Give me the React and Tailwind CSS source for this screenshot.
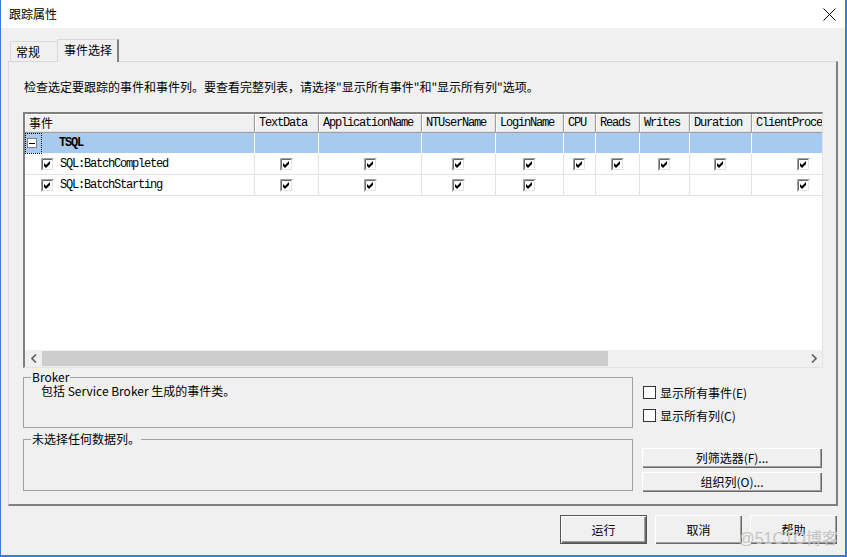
import React from "react";

const GridCheck = () => (
  <svg width="13" height="13" viewBox="0 0 13 13" className="block">
    <rect width="13" height="13" fill="#fff" />
    <path d="M0.5 12.5V0.5H12.5" stroke="#a0a0a0" fill="none" />
    <path d="M1.5 11.5V1.5H11.5" stroke="#696969" fill="none" />
    <path d="M1.5 11.5H11.5V1.5" stroke="#e3e3e3" fill="none" />
    <polygon points="3,5 5,7 9,3 9,6 5,10 3,8" fill="#000" />
  </svg>
);

const cols = [
  { name: "事件", w: 230 },
  { name: "TextData", w: 64 },
  { name: "ApplicationName", w: 103 },
  { name: "NTUserName", w: 74 },
  { name: "LoginName", w: 68 },
  { name: "CPU", w: 32 },
  { name: "Reads", w: 44 },
  { name: "Writes", w: 50 },
  { name: "Duration", w: 62 },
  { name: "ClientProcessID", w: 104 },
];

const rows = [
  { label: "SQL:BatchCompleted", checks: [1, 1, 1, 1, 1, 1, 1, 1, 1] },
  { label: "SQL:BatchStarting", checks: [1, 1, 1, 1, 0, 0, 0, 0, 1] },
];

const mono = "font-['Liberation_Mono','Noto_Sans_CJK_SC',monospace] text-[12px] tracking-[-1.2px]";

const Btn3D = ({ children, className = "" }) => (
  <div
    className={
      "flex items-center justify-center bg-[#f0f0f0] shadow-[inset_1px_1px_0_#fff,inset_-1px_-1px_0_#696969,inset_-2px_-2px_0_#a0a0a0] leading-[14px] " +
      className
    }
  >
    {children}
  </div>
);

export default function App() {
  return (
    <div className="relative w-[847px] h-[557px] flex flex-col overflow-hidden bg-[#f0f0f0] border-l border-r-2 border-b-2 border-[#3a7bd5] font-['Noto_Sans_CJK_SC',sans-serif] text-[12px] text-black">
      {/* Title bar */}
      <div className="h-[28px] shrink-0 bg-white flex items-center justify-between pl-[8px] pr-[9px]">
        <span className="leading-[14px]">跟踪属性</span>
        <svg width="13" height="13" viewBox="0 0 13 13">
          <path d="M0.5 0.5L12.5 12.5M12.5 0.5L0.5 12.5" stroke="#000" strokeWidth="1" />
        </svg>
      </div>

      {/* Body */}
      <div className="flex-1 flex flex-col px-[7px]">
        {/* Tabs */}
        <div className="h-[33px] shrink-0 flex items-end pl-[2px] relative z-10">
          <div className="w-[47px] h-[20px] border-t border-l border-[#d9d9d9] bg-[#f0f0f0] pl-[5px] pt-[3px] leading-[14px]">
            常规
          </div>
          <div className="w-[62px] h-[23px] -mb-px border-t border-l border-[#d9d9d9] border-r-2 border-r-[#808080] bg-[#f0f0f0] pl-[6px] pt-[3px] leading-[14px]">
            事件选择
          </div>
        </div>

        {/* Panel */}
        <div className="h-[445px] shrink-0 border-t border-l border-[#d9d9d9] border-r-2 border-b-2 border-r-[#808080] border-b-[#808080] pl-[14px] pt-[18px]">
          <div className="ml-[1px] h-[14px] leading-[14px] whitespace-nowrap">
            检查选定要跟踪的事件和事件列。要查看完整列表，请选择"显示所有事件"和"显示所有列"选项。
          </div>

          {/* Grid */}
          <div className="mt-[18px] w-[800px] h-[256px] flex flex-col bg-white border-l-2 border-t-2 border-l-[#808080] border-t-[#808080] border-r border-b border-r-[#e3e3e3] border-b-[#e3e3e3] overflow-hidden">
            <div className="flex-1 overflow-hidden">
              <div className="grid w-max grid-cols-[230px_64px_103px_74px_68px_32px_44px_50px_62px_104px]">
                {cols.map((c, i) => (
                  <div
                    key={c.name}
                    className={
                      "h-[19px] flex items-center pl-[4px] bg-[#f0f0f0] border-r border-b border-[#a0a0a0] shadow-[inset_1px_1px_0_#fff,inset_-1px_-1px_0_#e3e3e3] whitespace-nowrap overflow-hidden " +
                      (i === 0 ? "leading-[14px]" : mono)
                    }
                  >
                    {c.name}
                  </div>
                ))}

                {/* TSQL row */}
                <div className="h-[21px] bg-[#a6caf0] border-r border-b border-white flex items-center relative">
                  <div className="w-[17px] h-[21px] border border-dotted border-black flex items-center justify-start pl-[1px]">
                    <div className="w-[10px] h-[10px] bg-white border border-[#808080] flex items-center justify-center">
                      <div className="w-[6px] h-px bg-black" />
                    </div>
                  </div>
                  <span className={"ml-[17px] font-bold " + mono}>TSQL</span>
                </div>
                {cols.slice(1).map((c) => (
                  <div key={"t" + c.name} className="h-[21px] bg-[#a6caf0] border-r border-b border-white" />
                ))}

                {rows.map((r) => (
                  <React.Fragment key={r.label}>
                    <div className="h-[21px] border-r border-b border-[#e3e3e3] flex items-center pl-[16px]">
                      <GridCheck />
                      <span className={"ml-[6px] " + mono}>{r.label}</span>
                    </div>
                    {r.checks.map((v, i) => (
                      <div
                        key={i}
                        className="h-[21px] border-r border-b border-[#e3e3e3] flex items-center justify-center"
                      >
                        {v ? <GridCheck /> : null}
                      </div>
                    ))}
                  </React.Fragment>
                ))}
              </div>
            </div>

            {/* Horizontal scrollbar */}
            <div className="h-[17px] shrink-0 flex bg-[#f0f0f0]">
              <div className="w-[17px] flex items-center justify-center">
                <svg width="6" height="9" viewBox="0 0 6 9">
                  <path d="M5 0.5L1 4.5L5 8.5" stroke="#606060" strokeWidth="1.6" fill="none" />
                </svg>
              </div>
              <div className="w-[566px] my-[1px] bg-[#cdcdcd]" />
              <div className="flex-1" />
              <div className="w-[17px] flex items-center justify-center">
                <svg width="6" height="9" viewBox="0 0 6 9">
                  <path d="M1 0.5L5 4.5L1 8.5" stroke="#606060" strokeWidth="1.6" fill="none" />
                </svg>
              </div>
            </div>
          </div>

          {/* Bottom area */}
          <div className="mt-[2px] flex gap-[9px]">
            <div className="w-[610px] flex flex-col gap-[4px]">
              <fieldset className="h-[58px] border border-[#a0a0a0]">
                <legend className="ml-[7px] px-[1px] leading-[14px]">Broker</legend>
                <div className="pl-[17px] leading-[14px]">包括 Service Broker 生成的事件类。</div>
              </fieldset>
              <fieldset className="h-[59px] border border-[#a0a0a0]">
                <legend className="ml-[7px] px-[1px] leading-[14px]">未选择任何数据列。</legend>
              </fieldset>
            </div>
            <div className="w-[180px] flex flex-col pt-[16px]">
              <div className="flex items-center h-[13px] ml-[1px]">
                <div className="w-[13px] h-[13px] bg-white border border-[#333]" />
                <span className="ml-[4px] leading-[14px]">显示所有事件(E)</span>
              </div>
              <div className="flex items-center h-[13px] ml-[1px] mt-[10px]">
                <div className="w-[13px] h-[13px] bg-white border border-[#333]" />
                <span className="ml-[4px] leading-[14px]">显示所有列(C)</span>
              </div>
              <Btn3D className="mt-[26px] w-[180px] h-[20px]">列筛选器(F)...</Btn3D>
              <Btn3D className="mt-[4px] w-[180px] h-[20px]">组织列(O)...</Btn3D>
            </div>
          </div>
        </div>

        {/* Dialog buttons */}
        <div className="mt-[9px] flex justify-end gap-[8px] pr-[1px]">
          <Btn3D className="w-[87px] h-[29px] border border-[#555]">运行</Btn3D>
          <Btn3D className="w-[87px] h-[29px]">取消</Btn3D>
          <Btn3D className="w-[87px] h-[29px]">帮助</Btn3D>
        </div>
      </div>

      <div className="absolute right-[7px] bottom-[7px] text-[16px] leading-[18px] text-[#c4c4c4] font-['Liberation_Sans','Noto_Sans_CJK_SC',sans-serif] pointer-events-none">
        @51CTO博客
      </div>
    </div>
  );
}
